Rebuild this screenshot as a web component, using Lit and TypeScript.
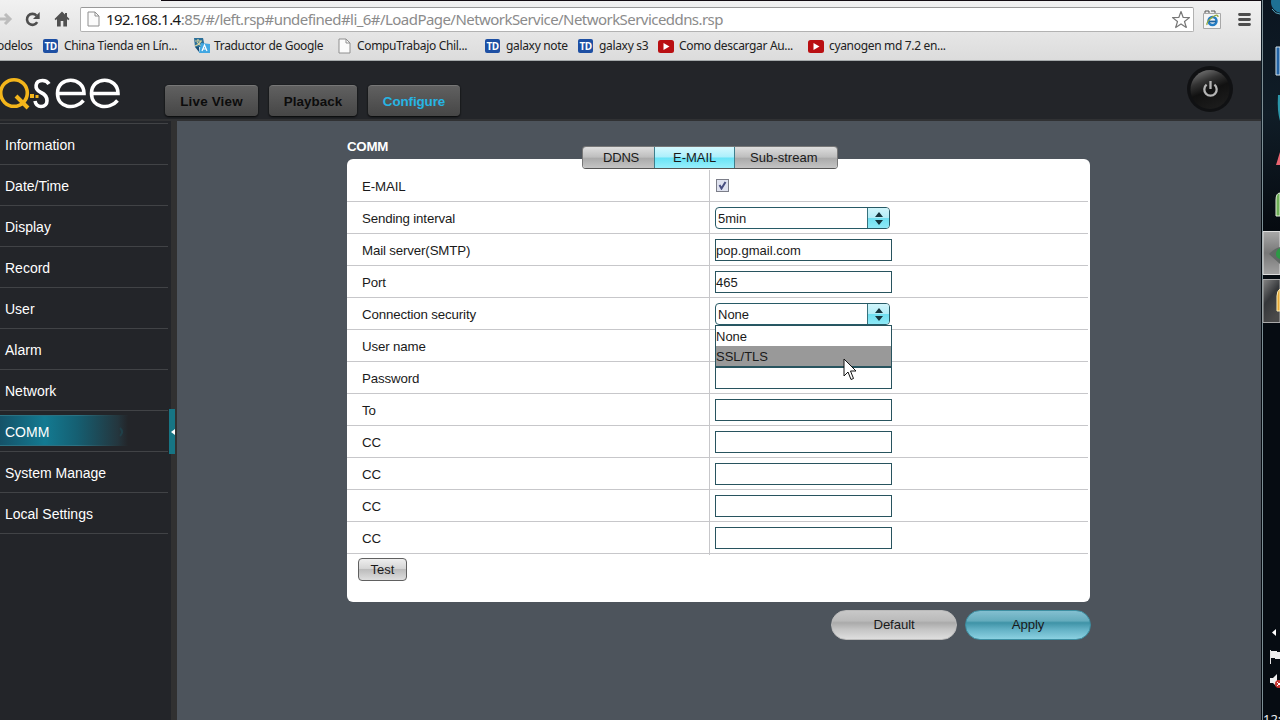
import { LitElement, html, css, svg, nothing } from "lit";
import { customElement, property } from "lit/decorators.js";
import { classMap } from "lit/directives/class-map.js";

const pageIcon = html`<svg width="13" height="16" viewBox="0 0 13 16">
  <path d="M1 1h7l4 4v10H1z" fill="#fbfbfb" stroke="#8f8f8f" />
  <path d="M8 1v4h4" fill="none" stroke="#8f8f8f" />
</svg>`;

const translateIcon = html`<svg width="17" height="16" viewBox="0 0 17 16">
  <path d="M1 0h9l2 9H2z" fill="#2b6f98" />
  <path d="M2 3h7M5 1v2M8 3q-2 4-6 5M4 4q2 3 5 4" stroke="#d9d39b" stroke-width="1.2" fill="none" />
  <path d="M8 5l9 1v9H6z" fill="#42a7e2" />
  <path d="M9 13l2.5-6 2.5 6M10 11h3" stroke="#fff" stroke-width="1.2" fill="none" />
  <path d="M2 9l4 5v-5z" fill="#174e78" />
</svg>`;

const videoIcon = html`<svg width="16" height="13" viewBox="0 0 16 13">
  <rect width="16" height="13" rx="2.5" fill="#b90f12" />
  <path d="M5.5 3v7l6-3.5z" fill="#fff" />
</svg>`;

const bookmarks = [
  { kind: "none", label: "odelos", cls: "b0" },
  { kind: "td", label: "China Tienda en Lín...", cls: "b1" },
  { kind: "translate", label: "Traductor de Google", cls: "b2" },
  { kind: "page", label: "CompuTrabajo Chil...", cls: "b3" },
  { kind: "td", label: "galaxy note", cls: "b4" },
  { kind: "td", label: "galaxy s3", cls: "b5" },
  { kind: "video", label: "Como descargar Au...", cls: "b6" },
  { kind: "video", label: "cyanogen md 7.2 en...", cls: "b7" },
];

@customElement("browser-chrome")
class BrowserChrome extends LitElement {
  static styles = css`
    :host {
      display: flex; flex-direction: column; height: 61px; box-sizing: border-box;
      background: linear-gradient(#f1f1f1, #dcdcdc); border-bottom: 1px solid #a5aaab;
      font-family: "Noto Sans", sans-serif; color: #222; overflow: hidden; flex: none;
    }
    .edge { height: 1px; margin-left: 161px; background: #120b11; flex: none; }
    .bar { display: flex; align-items: center; height: 36px; flex: none; }
    .fwd { width: 13px; }
    .reload { margin-left: 11px; }
    .home { margin-left: 13px; }
    .address {
      display: flex; align-items: center; width: 1114px; height: 25px; box-sizing: border-box;
      margin-left: 10px; border: 1px solid #b2b2b2; border-top-color: #999; border-radius: 2px;
      background: #fff; padding: 0 2px 0 6px;
    }
    .url { flex: 1; margin-left: 6px; font-size: 15px; line-height: 22px; white-space: nowrap; color: #8b8b8b; letter-spacing: -0.55px; }
    .url b { font-weight: 400; color: #191919; }
    .ie { margin-left: 9px; }
    .menu { margin-left: 17px; }
    svg { display: block; flex: none; }
    .marks { position: relative; display: flex; align-items: center; height: 18px; font-size: 12px; white-space: nowrap; }
    .mark { display: flex; align-items: center; gap: 6px; flex: none; box-sizing: border-box; height: 18px; line-height: 18px; letter-spacing: -0.33px; }
    .b0 { width: 43px; margin-left: -3px; }
    .b1 { width: 150px; margin-left: 3px; }
    .b2 { width: 145px; gap: 4px; }
    .b3 { width: 147px; }
    .b4 { width: 93px; }
    .b5 { width: 80px; }
    .b6 { width: 150px; gap: 5px; }
    .b7 { gap: 5px; }
    .td {
      width: 15px; height: 14px; background: #1d4fa3; border-radius: 2px; color: #fff;
      font: bold 10px/14px "Open Sans", sans-serif; letter-spacing: -0.5px; text-align: center;
    }
  `;

  private icon(kind: string) {
    if (kind === "td") return html`<span class="td">TD</span>`;
    if (kind === "translate") return translateIcon;
    if (kind === "page") return pageIcon;
    if (kind === "video") return videoIcon;
    return nothing;
  }

  render() {
    return html`
      <div class="edge"></div>
      <div class="bar">
        <svg class="fwd" width="13" height="16" viewBox="0 0 13 16"><path d="M0 8h9M5 3l5 5-5 5" fill="none" stroke="#bcbcbc" stroke-width="3" /></svg>
        <svg class="reload" width="17" height="17" viewBox="0 0 17 17">
          <path d="M13.2 11.2A5.5 5.5 0 1 1 12.5 4.6" fill="none" stroke="#4e4e4e" stroke-width="2.6" />
          <path d="M15.7 1v7H9z" fill="#4e4e4e" />
        </svg>
        <svg class="home" width="16" height="16" viewBox="0 0 16 16">
          <path d="M8 0.5L0.5 8l1.3 1.2L3 8v7.5h3.7V10h2.6v5.5H13V8l1.2 1.2L15.5 8 13 5.5V2h-2v1.5z" fill="#505050" />
        </svg>
        <div class="address">
          ${pageIcon}
          <span class="url"><b>192.168.1.4</b>:85/#/left.rsp#undefined#li_6#/LoadPage/NetworkService/NetworkServiceddns.rsp</span>
          <svg width="20" height="19" viewBox="0 0 20 19"><path d="M10 1.5l2.2 6 6.3.1-5 3.9 1.8 6-5.3-3.6-5.3 3.6 1.8-6-5-3.9 6.3-.1z" fill="#fff" stroke="#777" stroke-width="1.2" stroke-linejoin="round" /></svg>
        </div>
        <svg class="ie" width="18" height="19" viewBox="0 0 18 19">
          <path d="M.5 3.500h17v15H.5z" fill="#f5f5f5" stroke="#a8a8a8" />
          <path d="M2 3V1h4v2M8 1h4v2" fill="none" stroke="#555" />
          <circle cx="9.500" cy="11" r="4" fill="none" stroke="#247dc4" stroke-width="2.500" />
          <path d="M6 11.500h7" stroke="#1c619f" stroke-width="1.800" />
          <path d="M4 15Q3 12 9 7.500T15 7" fill="none" stroke="#94a83b" stroke-width="1.300" />
        </svg>
        <svg class="menu" width="13" height="13" viewBox="0 0 13 13"><path d="M1.500 1.500h10M1.500 6.500h10M1.500 11.500h10" stroke="#4d4d4d" stroke-width="2.800" stroke-linecap="round" /></svg>
      </div>
      <div class="marks">
        ${bookmarks.map((b) => html`<div class="mark ${b.cls}">${this.icon(b.kind)}<span>${b.label}</span></div>`)}
      </div>
    `;
  }
}

@customElement("site-header")
class SiteHeader extends LitElement {
  static styles = css`
    :host {
      display: flex; align-items: flex-start; height: 60px; box-sizing: border-box; flex: none;
      background: #232529; border-bottom: 2px solid #303133; padding-right: 27px;
      font-family: "Liberation Sans", Arial, sans-serif;
    }
    .logo { display: block; margin: 13px 0 0 -1px; flex: none; }
    nav { display: flex; gap: 11px; margin: 24px auto 0 45px; }
    .btn {
      box-sizing: border-box; height: 31px; border-radius: 4px; border-top: 1px solid #777; text-align: center;
      background: linear-gradient(#606060, #464646); box-shadow: 0 1px 2px #08090a, 0 0 1px #111;
      font-weight: bold; font-size: 13.4px; line-height: 31px; letter-spacing: 0.05px; color: #0c0c0c;
    }
    .live { width: 93px; letter-spacing: 0.2px; }
    .play { width: 88px; }
    .conf { width: 92px; color: #27b5e4; letter-spacing: -0.1px; }
    .power { display: block; margin-top: 4px; flex: none; }
  `;
  render() {
    return html`
      <svg class="logo" width="121" height="40" viewBox="0 0 121 40" role="img" aria-label="Q-see">
        <g fill="none" stroke-width="3.600">
          <g stroke="#f3b51b">
            <circle cx="15" cy="19" r="13.300" />
            <path d="M17 22L29 34" stroke-width="4" />
          </g>
          <g stroke="#fff">
            <path d="M50 10Q48 6.500 43.500 6.500C36 6.500 34.500 15 42 18.500C50 22 50 32.500 42 32.500Q37 32.500 36 27" />
            <path d="M58 19.500H85C85 2 58.500 1.500 58.500 19.500C58.500 34 76 36.500 84.500 26.500" />
            <path d="M92 19.500H119C119 2 92.500 1.500 92.500 19.500C92.500 34 110 36.500 118.500 26.500" />
          </g>
        </g>
        <path d="M31 20h4v4h-4zM36.500 21h3v3h-3z" fill="#f3b51b" />
      </svg>
      <nav>
        <div class="btn live">Live View</div>
        <div class="btn play">Playback</div>
        <div class="btn conf">Configure</div>
      </nav>
      <svg class="power" width="48" height="48" viewBox="0 0 48 48">
        <defs>
          <linearGradient id="g" x1="0.200" y1="0" x2="0.600" y2="1">
            <stop offset="0" stop-color="#777" /><stop offset="0.300" stop-color="#333" />
            <stop offset="0.550" stop-color="#111" /><stop offset="1" stop-color="#1c1c1c" />
          </linearGradient>
        </defs>
        <circle cx="24" cy="24" r="23" fill="#101113" />
        <circle cx="24" cy="24.500" r="19.500" fill="url(#g)" />
        <path d="M20.600 19.700A6.200 6.200 0 1 0 28.400 19.700" fill="none" stroke="#b5b5b5" stroke-width="2.300" />
        <path d="M24.500 16v8" stroke="#b5b5b5" stroke-width="2.300" />
      </svg>
    `;
  }
}

@customElement("side-menu")
class SideMenu extends LitElement {
  static styles = css`
    :host {
      display: flex; width: 177px; box-sizing: border-box; flex: none; background: #232529;
      font-family: "Liberation Sans", Arial, sans-serif; font-size: 14px; color: #fff;
    }
    .list { width: 168px; padding-top: 2px; border-right: 0; }
    .item {
      display: flex; align-items: center; height: 41px; box-sizing: border-box; padding-left: 5px;
      border-top: 1px solid #414346; padding-top: 1px;
    }
    .last { border-bottom: 1px solid #414346; height: 42px; }
    .active { padding: 4px 0 5px; }
    .glow {
      display: flex; align-items: center; justify-content: space-between; width: 128px; height: 31px;
      box-sizing: border-box; padding: 2px 3px 0 5px; border-top: 1px solid #236174; border-bottom: 1px solid #1c5a6c;
      background: linear-gradient(90deg, #155268 0, #137a91 35%, #155f72 60%, #24363e 92%, #232529 100%);
      border-image: linear-gradient(90deg, #2b7283 0 60%, #232529) 1;
      border-left: 0; border-right: 0;
    }
    .rail { width: 6px; margin-left: 3px; background: #313131; padding-top: 288px; }
    .handle { display: flex; align-items: center; justify-content: flex-end; width: 6px; height: 45px; margin-left: -2px; background: #177584; }
    svg { display: block; }
  `;
  render() {
    const names = ["Information", "Date/Time", "Display", "Record", "User", "Alarm", "Network", "COMM", "System Manage", "Local Settings"];
    return html`
      <div class="list">
        ${names.map((n, i) => html`<div class=${classMap({ item: true, active: n === "COMM", last: i === names.length - 1 })}>
          ${n === "COMM"
            ? html`<div class="glow"><span>${n}</span><svg width="6" height="10" viewBox="0 0 6 10"><path d="M1 1q4 4 0 8" stroke="#203f48" stroke-width="2" fill="none" /></svg></div>`
            : n}
        </div>`)}
      </div>
      <div class="rail"><div class="handle"><svg width="4" height="6" viewBox="0 0 4 6"><path d="M4 0v6L0 3z" fill="#fff" /></svg></div></div>
    `;
  }
}

@customElement("select-box")
class SelectBox extends LitElement {
  @property() value = "";
  static styles = css`
    :host {
      display: flex; width: 175px; height: 22px; box-sizing: border-box; overflow: hidden;
      border: 1px solid #275a66; border-radius: 4px; background: #fff;
    }
    .value { flex: 1; padding-left: 2px; line-height: 21px; }
    .arrows {
      display: flex; align-items: center; justify-content: center; width: 21px; border-left: 1px solid #37717c;
      background: linear-gradient(#d0f5fb 0, #b4edf7 48%, #70dff0 52%, #8ee9f7 100%);
    }
  `;
  render() {
    return html`<div class="value">${this.value}</div>
      <div class="arrows"><svg width="8" height="13" viewBox="0 0 8 13"><path d="M4 0l4 5H0zM0 8h8l-4 5z" fill="#16353d" /></svg></div>`;
  }
}

@customElement("mail-settings")
class MailSettings extends LitElement {
  static styles = css`
    :host {
      display: flex; flex-direction: column; flex: 1; padding: 17px 171px 0 170px; background: #4d545c;
      font-family: "Liberation Sans", Arial, sans-serif; font-size: 13px; color: #1a1a1a;
    }
    .title { height: 21px; line-height: 17px; font-size: 13.3px; letter-spacing: -0.25px; font-weight: bold; color: #fff; }
    .panel { position: relative; width: 743px; height: 443px; box-sizing: border-box; padding: 11px 2px 0 0; background: #fff; border-radius: 6px; }
    .tabs {
      position: absolute; left: 235px; top: -13px; display: flex; width: 256px; height: 23px; box-sizing: border-box;
      border: 1px solid #777; border-bottom-color: #555; border-radius: 4px; overflow: hidden; line-height: 21px;
    }
    .tab { box-sizing: border-box; background: linear-gradient(#dedede, #bebebe 48%, #aaa 54%, #c4c4c4); letter-spacing: 0; }
    .t1 { width: 71px; padding-left: 20px; letter-spacing: -0.2px; }
    .t2 { width: 81px; padding-left: 18px; border: solid #3d7f8d; border-width: 0 1px; background: linear-gradient(#d5f9ff, #aceffb 48%, #68e3f6 52%, #98effc); }
    .t3 { flex: 1; padding-left: 15px; letter-spacing: 0.05px; }
    .row { display: grid; grid-template-columns: 363px 1fr; height: 32px; box-sizing: border-box; border-bottom: 1px solid #c7c7ca; }
    .label { padding-left: 15px; line-height: 33px; border-right: 1px solid #c7c7ca; font-size: 13.3px; letter-spacing: -0.15px; }
    .field { position: relative; padding: 5px 0 0 5px; }
    .check { display: flex; align-items: center; justify-content: center; width: 13px; height: 13px; box-sizing: border-box; border: 1px solid #7c7e89; background: #dfe2ef; margin: 4px 0 0 1px; }
    .input { width: 177px; height: 22px; box-sizing: border-box; border: 1px solid #28545f; line-height: 21px; background: #fff; letter-spacing: 0.03px; }
    .menu { position: absolute; z-index: 2; left: 5px; top: 27px; width: 177px; height: 43px; box-sizing: border-box; border: 1px solid #28545f; border-bottom-width: 2px; background: #fff; line-height: 20px; }
    .opt { height: 20px; line-height: 21px; }
    .hot { background: #999; }
    .cursor { position: absolute; z-index: 3; left: 133px; top: 60px; }
    .test {
      width: 49px; height: 23px; box-sizing: border-box; margin: 4px 0 0 11px; text-align: center; line-height: 22px;
      border: 1px solid #606060; border-radius: 4px; background: linear-gradient(#eee, #d6d6d6 45%, #bcbcbc 50%, #dedede);
    }
    .actions { display: flex; justify-content: flex-end; gap: 8px; width: 744px; margin-top: 8px; }
    .pill { width: 126px; height: 30px; box-sizing: border-box; border-radius: 15px; text-align: center; line-height: 27px; font-size: 13.2px; letter-spacing: -0.1px; }
    .grey { background: linear-gradient(#c8c8c8 0, #bababa 35%, #aaa 42%, #c4c4c4 65%, #dedede 100%); border: 1px solid #bbb; }
    .teal { background: linear-gradient(#83bfd0 0, #65acbd 35%, #3f93a7 42%, #62b0c4 65%, #8bd1e1 100%); border: 1px solid #3d8ea1; }
    svg { display: block; }
  `;

  private row(label: string, field: unknown) {
    return html`<div class="row"><div class="label">${label}</div><div class="field">${field}</div></div>`;
  }
  private input(value = "") {
    return html`<div class="input">${value}</div>`;
  }

  render() {
    return html`
      <div class="title">COMM</div>
      <div class="panel">
        <div class="tabs"><div class="tab t1">DDNS</div><div class="tab t2">E-MAIL</div><div class="tab t3">Sub-stream</div></div>
        ${this.row("E-MAIL", html`<div class="check"><svg width="9" height="9" viewBox="0 0 9 9"><path d="M1.500 4l2 3.500L7.500 1" fill="none" stroke="#474e80" stroke-width="2" /></svg></div>`)}
        ${this.row("Sending interval", html`<select-box value="5min"></select-box>`)}
        ${this.row("Mail server(SMTP)", this.input("pop.gmail.com"))}
        ${this.row("Port", this.input("465"))}
        ${this.row("Connection security", html`<select-box value="None"></select-box>
          <div class="menu"><div class="opt">None</div><div class="opt hot">SSL/TLS</div></div>
          <svg class="cursor" width="14" height="23" viewBox="0 0 14 23"><path d="M1 1v17l4-4 3 7.500 2.500-1L7.500 13H13z" fill="#fff" stroke="#111" /></svg>`)}
        ${this.row("User name", this.input())}
        ${this.row("Password", this.input())}
        ${this.row("To", this.input())}
        ${[1, 2, 3, 4].map(() => this.row("CC", this.input()))}
        <div class="test">Test</div>
      </div>
      <div class="actions"><div class="pill grey">Default</div><div class="pill teal">Apply</div></div>
    `;
  }
}

@customElement("desktop-edge")
class DesktopEdge extends LitElement {
  static styles = css`
    :host { display: block; width: 19px; height: 720px; flex: none; overflow: hidden; background: #060c12; }
    svg { display: block; }
    .clock { font: 13px "Noto Sans", sans-serif; }
  `;
  render() {
    return html`<svg width="19" height="720" viewBox="0 0 19 720">
      <defs>
        <linearGradient id="top" x1="0" y1="0" x2="0" y2="1"><stop offset="0" stop-color="#0b1520" /><stop offset="0.500" stop-color="#101d27" /><stop offset="1" stop-color="#060a10" /></linearGradient>
        <linearGradient id="a" x1="0" y1="0" x2="0" y2="1"><stop offset="0" stop-color="#a9a9a9" /><stop offset="0.500" stop-color="#777" /><stop offset="1" stop-color="#a2a2a2" /></linearGradient>
        <linearGradient id="b" x1="0" y1="0" x2="0.500" y2="1"><stop offset="0" stop-color="#858585" /><stop offset="0.500" stop-color="#35373a" /><stop offset="1" stop-color="#4a4a4a" /></linearGradient>
      </defs>
      ${svg`
        <rect width="19" height="230" fill="url(#top)" />
        <path d="M1.500 0v720" stroke="#7d8f95" />
        <circle cx="21" cy="2" r="11" fill="#1e7093" /><path d="M11 9q3 5 8 5" stroke="#56a9c4" fill="none" />
        <path d="M15 47h4v28h-4z" fill="#2363a4" stroke="#d5e5ee" />
        <path d="M17 95h2v26q-3-10-2-26" fill="#2b96a9" />
        <path d="M15 165l4-13v13z" fill="#e96470" />
        <path d="M15 216v-16q0-7 4-7v23z" fill="#6faf58" stroke="#e2efd9" />
        <path d="M2 231.500h17v43H2z" fill="url(#a)" stroke="#ddd" />
        <path d="M2 279.500h17v43H2z" fill="url(#b)" stroke="#aaa" />
        <path d="M8 254q6-6 11-7v17z" fill="#626866" /><path d="M15 254q0-4 4-6v11q-4-1-4-5" fill="#2c9945" />
        <path d="M16 311v-15q0-5 3-7v22z" fill="#e5a838" stroke="#fff0ba" />
        <path d="M15 629v7l-4-3.500z" fill="#fff" />
        <path d="M9.500 650v14" stroke="#e6e6e6" /><path d="M10 651h6v1h3v7h-5v-1h-4z" fill="#eee" />
        <path d="M9 678h3l4-4v13l-4-4H9z" fill="#eee" /><circle cx="18" cy="684" r="4" fill="#c8342f" /><path d="M16 682l4 4M16 686l4-4" stroke="#fff" />
      `}
      <text class="clock" x="2" y="724" fill="#eee">12:</text>
    </svg>`;
  }
}

@customElement("app-root")
class AppRoot extends LitElement {
  static styles = css`
    :host { display: flex; width: 1280px; height: 720px; overflow: hidden; background: #060c12; }
    .window { display: flex; flex-direction: column; width: 1261px; height: 720px; flex: none; overflow: hidden; }
    .body { display: flex; flex: 1; min-height: 0; }
    mail-settings { box-sizing: border-box; }
  `;
  render() {
    return html`
      <div class="window">
        <browser-chrome></browser-chrome>
        <site-header></site-header>
        <div class="body"><side-menu></side-menu><mail-settings></mail-settings></div>
      </div>
      <desktop-edge></desktop-edge>
    `;
  }
}
